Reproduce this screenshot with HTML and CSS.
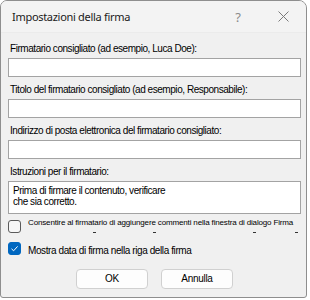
FILE: index.html
```html
<!DOCTYPE html>
<html lang="it">
<head>
    <meta charset="UTF-8">
    <title>Impostazioni della firma</title>
    <link rel="stylesheet" href="styles.css">
</head>
<body>
    <div class="window">
        <!-- Barra del titolo -->
        <div class="titlebar">
            <span class="title">Impostazioni della firma</span>
            <span class="help">?</span>
            <svg class="close" width="11" height="11" viewBox="0 0 11 11">
                <path d="M0.5 0.5 L10.5 10.5 M10.5 0.5 L0.5 10.5" stroke="#7a7a7a" stroke-width="1" fill="none"/>
            </svg>
        </div>

        <div class="content">
            <div class="field">
                <div class="label">Firmatario consigliato (ad esempio, Luca Doe):</div>
                <div class="input"></div>
            </div>
            <div class="field">
                <div class="label">Titolo del firmatario consigliato (ad esempio, Responsabile):</div>
                <div class="input"></div>
            </div>
            <div class="field">
                <div class="label">Indirizzo di posta elettronica del firmatario consigliato:</div>
                <div class="input"></div>
            </div>
            <div class="field last">
                <div class="label">Istruzioni per il firmatario:</div>
                <div class="input textarea">Prima di firmare il contenuto, verificare<br>che sia corretto.</div>
            </div>

            <div class="check-row small">
                <span class="box"></span>
                <span class="check-label">Consentire al firmatario di aggiungere commenti nella finestra di dialogo Firma</span>
            </div>
            <div class="marks">
                <span style="margin-left: 85px"></span>
                <span style="margin-left: 57px"></span>
                <span style="margin-left: 97px"></span>
                <span style="margin-left: 39px"></span>
            </div>

            <div class="check-row">
                <span class="box checked">
                    <svg width="13" height="13" viewBox="0 0 13 13">
                        <path d="M3.5 6.8 L5.6 8.8 L9.6 4.4" stroke="#fff" stroke-width="1" fill="none"/>
                    </svg>
                </span>
                <span class="check-label">Mostra data di firma nella riga della firma</span>
            </div>

            <div class="buttons">
                <div class="btn">OK</div>
                <div class="btn">Annulla</div>
            </div>
        </div>
    </div>
</body>
</html>
```

FILE: styles.css
```css
body {
    margin: 0;
    background: #ffffff;
    font-family: "Liberation Sans", Arial, sans-serif;
}

/* Finestra di dialogo */
.window {
    width: 305px;
    height: 296px;
    border: 1px solid #8e8e8e;
    border-radius: 7px 8px 3px 3px;
    background: #f0f0f0;
    overflow: hidden;
}

.titlebar {
    height: 31px;
    display: flex;
    align-items: center;
    background: #f3f3f3;
    border-bottom: 1px solid #ebebeb;
}

.title {
    font-family: "Noto Sans", "Open Sans", sans-serif;
    font-size: 11px;
    letter-spacing: -0.3px;
    color: #1a1a1a;
    margin-left: 11px;
    flex: 1;
}

.help {
    font-family: "Noto Sans", sans-serif;
    font-size: 13px;
    color: #8a8a8a;
    margin-right: 37px;
}

.close {
    margin-right: 17px;
}

/* Contenuto */
.content {
    padding: 9px 5px 0 7px;
}

.field {
    margin-bottom: 6px;
}

.label {
    font-size: 10px;
    letter-spacing: -0.45px;
    line-height: 14px;
    color: #000;
    padding-left: 2px;
    margin-bottom: 2px;
    white-space: nowrap;
}

.input {
    height: 17px;
    background: #fff;
    border: 1px solid #a3a3a3;
}

.textarea {
    font-size: 10px;
    letter-spacing: -0.45px;
    line-height: 11px;
    padding: 3px 0 0 4px;
    box-sizing: border-box;
    height: 33px;
}

/* Caselle di controllo */
.check-row {
    display: flex;
    align-items: center;
    height: 13px;
    white-space: nowrap;
}

.box {
    width: 11px;
    height: 11px;
    border: 1px solid #5a5a5a;
    border-radius: 3px;
    background: #f7f7f7;
    margin-right: 7px;
    flex: none;
}

.box.checked {
    background: #0067c0;
    border-color: #0067c0;
    display: flex;
    align-items: center;
    justify-content: center;
}

.box.checked svg {
    flex: none;
}

.check-label {
    font-size: 10px;
    letter-spacing: -0.4px;
    color: #000;
    margin-top: 4px;
}

.small {
    height: 12px;
    align-items: flex-start;
}

.small .check-label {
    font-size: 8px;
    letter-spacing: -0.15px;
    line-height: 6px;
    margin-top: 0;
}

.marks {
    display: flex;
    height: 10px;
}

.marks span {
    width: 3px;
    height: 1px;
    background: #333;
}

.buttons {
    display: flex;
    justify-content: center;
    gap: 13px;
    margin-top: 14px;
}

.btn {
    width: 70px;
    height: 18px;
    line-height: 18px;
    text-align: center;
    font-size: 10px;
    letter-spacing: -0.3px;
    background: #fdfdfd;
    border: 1px solid #d0d0d0;
    border-radius: 4px;
}
```
